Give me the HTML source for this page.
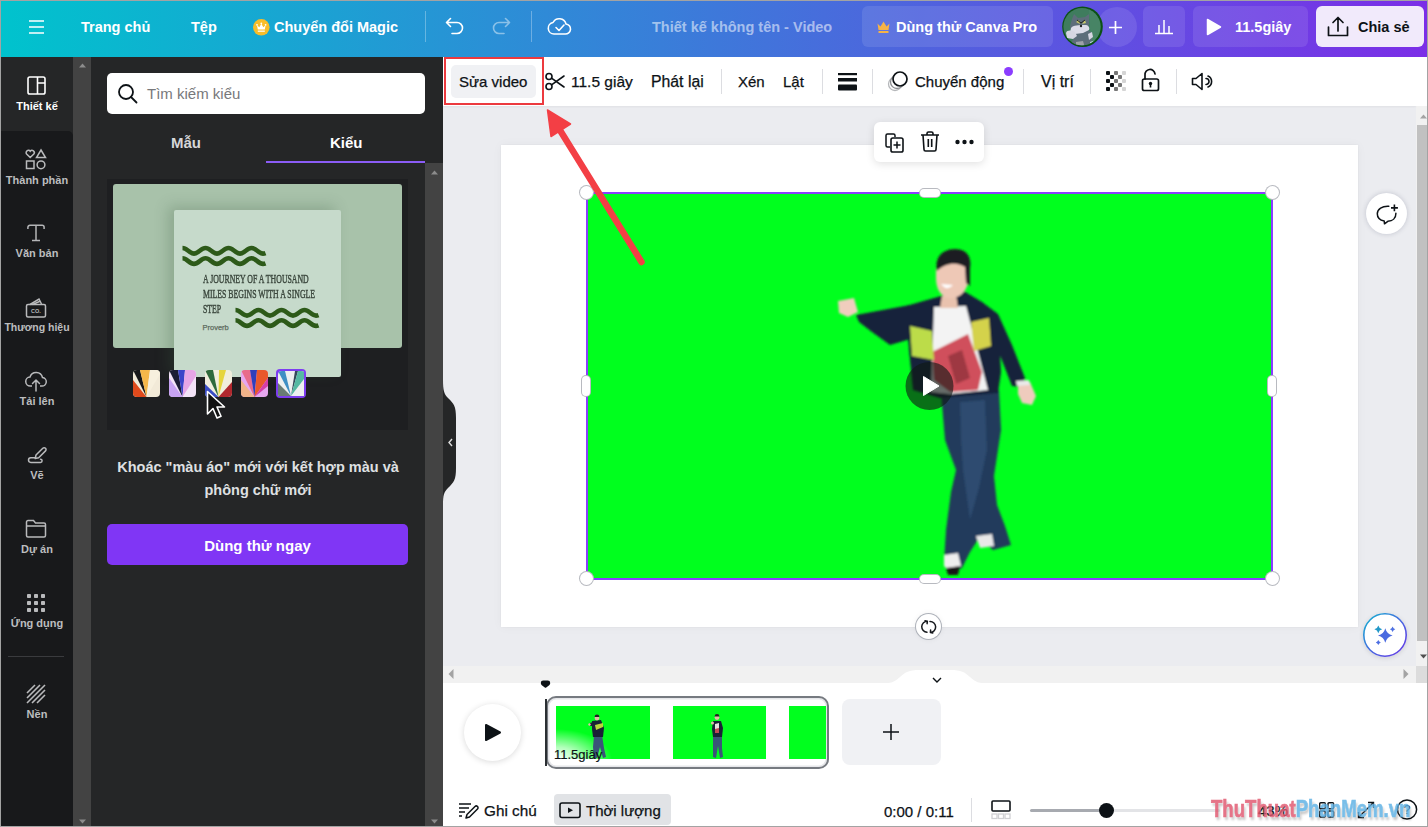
<!DOCTYPE html>
<html><head><meta charset="utf-8">
<style>
*{box-sizing:border-box;margin:0;padding:0}
html,body{width:1428px;height:827px;overflow:hidden;background:#a3a3a3;font-family:"Liberation Sans",sans-serif}
.a{position:absolute}
.t{position:absolute;white-space:nowrap;line-height:1}
svg{position:absolute;overflow:visible}
#hdr{left:1px;top:1px;width:1426px;height:56px;background:linear-gradient(90deg,#00c3cd 0%,#7b2ee7 100%)}
.ht{color:#fff;font-weight:bold;font-size:15px}
.hb{background:rgba(255,255,255,0.1);border-radius:6px}
#side{left:1px;top:57px;width:72px;height:770px;background:#18191b}
.sl{position:absolute;left:1px;width:72px;text-align:center;color:#bcbdbf;font-size:11px;font-weight:bold;line-height:1;white-space:nowrap}
.si{stroke:#b9babc;fill:none;stroke-width:1.5}
#sscroll{left:73px;top:57px;width:18px;height:770px;background:#434343}
#panel{left:91px;top:57px;width:352px;height:770px;background:#252627}
#main{left:443px;top:57px;width:985px;height:770px;background:#ebecf0}
.tt{font-size:15px;color:#0d1216;-webkit-text-stroke:0.25px #0d1216}
.sep{position:absolute;width:1px;background:#dcdde1}
</style></head><body>

<!-- HEADER -->
<div id="hdr" class="a"></div>
<svg style="left:29px;top:20px" width="15" height="14"><path d="M0 1H15M0 7H15M0 13H15" stroke="#fff" stroke-width="1.5"/></svg>
<div class="t ht" style="left:81px;top:19.5px;font-size:14.5px">Trang chủ</div>
<div class="t ht" style="left:191px;top:19.5px;font-size:14.5px">Tệp</div>
<svg style="left:253px;top:19px" width="17" height="17"><circle cx="8.3" cy="8.3" r="8.3" fill="#f8bd2a"/><path d="M4 6.2L6.3 8.2L8.3 4.8L10.3 8.2L12.6 6.2L11.8 10.5H4.8Z" fill="#fff"/><circle cx="4" cy="5.8" r="0.9" fill="#fff"/><circle cx="8.3" cy="4.4" r="0.9" fill="#fff"/><circle cx="12.6" cy="5.8" r="0.9" fill="#fff"/><rect x="4.8" y="11.5" width="7" height="1.4" fill="#fff" opacity="0.85"/></svg>
<div class="t ht" style="left:274px;top:19.5px;font-size:14.5px">Chuyển đổi Magic</div>
<div class="a" style="left:425px;top:11px;width:1px;height:31px;background:rgba(255,255,255,0.3)"></div>
<svg style="left:445px;top:17px" width="20" height="18"><path d="M2 5.5H12A5.5 5.5 0 0 1 12 16.5H7M5.5 1.5L1.5 5.5L5.5 9.5" stroke="#fff" stroke-width="1.6" fill="none" stroke-linecap="round" stroke-linejoin="round"/></svg>
<svg style="left:491px;top:17px" width="20" height="18"><path d="M18 5.5H8A5.5 5.5 0 0 0 8 16.5H13M14.5 1.5L18.5 5.5L14.5 9.5" stroke="rgba(255,255,255,0.45)" stroke-width="1.6" fill="none" stroke-linecap="round" stroke-linejoin="round"/></svg>
<div class="a" style="left:531px;top:11px;width:1px;height:31px;background:rgba(255,255,255,0.3)"></div>
<svg style="left:548px;top:15px" width="24" height="22"><path d="M6 19H17A5 5 0 0 0 18 9A7 7 0 0 0 5 7.5A5.8 5.8 0 0 0 6 19Z" stroke="#fff" stroke-width="1.6" fill="none" stroke-linejoin="round"/><path d="M8 12.5L11 15.5L16 10" stroke="#fff" stroke-width="1.6" fill="none" stroke-linecap="round" stroke-linejoin="round"/></svg>
<div class="t ht" style="left:652px;top:19.5px;font-size:14.5px;color:rgba(255,255,255,0.55)">Thiết kế không tên - Video</div>
<div class="a hb" style="left:862px;top:6px;width:191px;height:41px"></div>
<svg style="left:877px;top:21px" width="13" height="12"><path d="M0.5 2.5L3.5 5.5L6.5 0.5L9.5 5.5L12.5 2.5L11.5 9H1.5Z" fill="#f5b347"/><rect x="1.5" y="10" width="10" height="2" fill="#f5b347"/></svg>
<div class="t ht" style="left:896px;top:19.5px;font-size:14.5px">Dùng thử Canva Pro</div>
<div class="a" style="left:1097px;top:6.5px;width:40px;height:40px;border-radius:50%;background:rgba(255,255,255,0.1)"></div>
<svg style="left:1061px;top:6px" width="42" height="42"><defs><clipPath id="av"><circle cx="21" cy="20.7" r="18.6"/></clipPath></defs>
<circle cx="21.5" cy="20.7" r="20.3" fill="#0b5114"/>
<g clip-path="url(#av)"><rect width="42" height="42" fill="#3f7c5e"/><path d="M28 0L42 10V42H30Z" fill="#4d8a6a" opacity="0.6"/>
<path d="M11 13L13 8L17 12L24 11L28 8L28 18L27 24L30 26L31 34L26 42H12L11 36L13 30L10 26L9 20Z" fill="#5d6d7a"/>
<path d="M10 22C12 19 18 19 24 19C27 19 29 21 28 24L22 27L14 28L9 27Z" fill="#dcdce8"/>
<path d="M5 27C6 24 10 24 14 26L16 30L12 33L6 32Z" fill="#d6d6e2"/>
<path d="M27 28L31 26L32 31L28 34Z" fill="#d6d6e2"/>
<path d="M15 36L22 35L24 42H15Z" fill="#9ea2a8"/>
<path d="M29 36L38 33L40 40L30 42Z" fill="#c8d8ea"/>
<path d="M15 16L18 14L19 18ZM21 18L24 14L25 17Z" fill="#c9c86a"/><path d="M16 14L20 17L24 14" stroke="#222" stroke-width="1" fill="none"/><circle cx="20" cy="20" r="1.2" fill="#222"/>
</g></svg>
<svg style="left:1109px;top:21px" width="13" height="13"><path d="M6.5 0V13M0 6.5H13" stroke="#fff" stroke-width="1.7"/></svg>
<div class="a hb" style="left:1143px;top:6px;width:42px;height:41px"></div>
<svg style="left:1154px;top:17px" width="20" height="18"><path d="M1 16.5H19M5 16V8M10 16V3M15 16V9" stroke="#fff" stroke-width="1.5"/></svg>
<div class="a hb" style="left:1193px;top:6px;width:115px;height:41px"></div>
<svg style="left:1206px;top:18px" width="16" height="18"><path d="M1.5 1.5L14.5 9L1.5 16.5Z" fill="#fff" stroke="#fff" stroke-width="1.5" stroke-linejoin="round"/></svg>
<div class="t ht" style="left:1235px;top:19.5px;font-size:14.5px">11.5giây</div>
<div class="a" style="left:1316px;top:6px;width:108px;height:41px;border-radius:6px;background:#f1eafb"></div>
<svg style="left:1327px;top:16px" width="22" height="21"><path d="M1.5 11V19.5H20.5V11M11 15V2M6 6.5L11 1.5L16 6.5" stroke="#0d1216" stroke-width="1.7" fill="none" stroke-linecap="round" stroke-linejoin="round"/></svg>
<div class="t ht" style="left:1358px;top:19.5px;font-size:14.5px;color:#0d1216">Chia sẻ</div>

<!-- SIDEBAR -->
<div id="side" class="a"></div>
<div class="a" style="left:1px;top:57px;width:72px;height:80px;background:#252627"></div><div class="a" style="left:1px;top:131px;width:72px;height:10px;background:#18191b;border-top-right-radius:5px"></div>
<div id="sscroll" class="a"></div>
<svg style="left:78.5px;top:63px" width="8" height="5"><path d="M0 4.5L3.5 0.5L7 4.5Z" fill="#8c8c8c"/></svg>
<svg style="left:78.5px;top:819px" width="8" height="5"><path d="M0 0.5L3.5 4.5L7 0.5Z" fill="#8c8c8c"/></svg>

<svg style="left:27px;top:76px" width="19" height="19"><rect x="1" y="1" width="17" height="17" rx="1.8" stroke="#fff" stroke-width="1.6" fill="none"/><path d="M10.5 1V18M10.5 7H18" stroke="#fff" stroke-width="1.6"/></svg>
<div class="sl" style="top:100.5px;color:#fff">Thiết kế</div>

<svg style="left:25px;top:149px" width="22" height="21" class="si"><path d="M5.2 8.5L1.6 5A2.1 2.1 0 0 1 5.2 2.2A2.1 2.1 0 0 1 8.8 5Z" /><path d="M16 1L20.5 8.5H11.5Z"/><rect x="1.5" y="12" width="7.5" height="7.5"/><circle cx="16" cy="15.8" r="3.9"/></svg>
<div class="sl" style="top:174.5px">Thành phần</div>

<svg style="left:26px;top:223px" width="20" height="20"><path d="M1.9 6V4.3A2 2 0 0 1 3.9 2.3H16.1A2 2 0 0 1 18.1 4.3V6M10 2.3V17.6M6 17.6H14" stroke="#b4b5b7" stroke-width="1.5" fill="none"/></svg>
<div class="sl" style="top:248px">Văn bản</div>

<svg style="left:25px;top:296px" width="22" height="22" class="si"><path d="M5 8.5L14 3L16.5 8"/><path d="M7.5 8.5L15 5.2"/><rect x="1.5" y="8.5" width="19" height="12.5" rx="1.5"/><text x="11" y="17" font-size="5.5" font-family="Liberation Sans" font-weight="bold" fill="#b9babc" stroke="none" text-anchor="middle">CO.</text></svg>
<div class="sl" style="top:322px;font-size:10.5px">Thương hiệu</div>

<svg style="left:25px;top:370px" width="22" height="22" class="si"><path d="M7 16H5.5A4.5 4.5 0 0 1 5 7A6.5 6.5 0 0 1 17.5 7.5A4.2 4.2 0 0 1 16.5 16H15"/><path d="M11 21V10M7.5 13.5L11 10L14.5 13.5" stroke-linecap="round" stroke-linejoin="round"/></svg>
<div class="sl" style="top:396px">Tải lên</div>

<svg style="left:26px;top:444px" width="22" height="22" class="si"><path d="M10 11L16.8 4.2A1.9 1.9 0 0 1 19.5 6.9L12.7 13.7L9.2 14.6Z" stroke-linejoin="round"/><path d="M9.5 13.8H4.8A2.3 2.3 0 0 0 4.8 18.4H14.5A1.6 1.6 0 0 0 14.5 15.2" stroke-linecap="round"/></svg>
<div class="sl" style="top:470px">Vẽ</div>

<svg style="left:25px;top:519px" width="22" height="20" class="si"><path d="M1.5 3A1.5 1.5 0 0 1 3 1.5H8.5L10.5 4H19A1.5 1.5 0 0 1 20.5 5.5V16.5A1.5 1.5 0 0 1 19 18H3A1.5 1.5 0 0 1 1.5 16.5Z M1.5 7H20.5"/></svg>
<div class="sl" style="top:543.5px">Dự án</div>

<svg style="left:27px;top:594px" width="18" height="18"><g fill="#b9babc"><rect x="0" y="0" width="4" height="4" rx="0.8"/><rect x="7" y="0" width="4" height="4" rx="0.8"/><rect x="14" y="0" width="4" height="4" rx="0.8"/><rect x="0" y="7" width="4" height="4" rx="0.8"/><rect x="7" y="7" width="4" height="4" rx="0.8"/><rect x="14" y="7" width="4" height="4" rx="0.8"/><rect x="0" y="14" width="4" height="4" rx="0.8"/><rect x="7" y="14" width="4" height="4" rx="0.8"/><rect x="14" y="14" width="4" height="4" rx="0.8"/></g></svg>
<div class="sl" style="top:617.5px">Ứng dụng</div>

<div class="a" style="left:8px;top:656px;width:56px;height:1px;background:#3a3b3e"></div>
<svg style="left:26px;top:684px" width="20" height="20"><path d="M1 9L9 1M1 14L14 1M1 19L19 1M6 19L19 6M11 19L19 11" stroke="#b9babc" stroke-width="1.6"/></svg>
<div class="sl" style="top:708.5px">Nền</div>

<!-- PANEL -->
<div id="panel" class="a"></div>
<div class="a" style="left:107px;top:73px;width:318px;height:41px;background:#fff;border-radius:5px"></div>
<svg style="left:117px;top:83px" width="22" height="22"><circle cx="9" cy="9" r="7" stroke="#0d1216" stroke-width="1.8" fill="none"/><path d="M14 14L19.5 19.5" stroke="#0d1216" stroke-width="1.8" stroke-linecap="round"/></svg>
<div class="t" style="left:147px;top:86.3px;font-size:15px;color:#77787b">Tìm kiếm kiểu</div>
<div class="t" style="left:171px;top:134.8px;font-size:15px;font-weight:bold;color:#d6d7d9">Mẫu</div>
<div class="t" style="left:330px;top:134.8px;font-size:15px;font-weight:bold;color:#fff">Kiểu</div>
<div class="a" style="left:266px;top:161px;width:159px;height:2px;background:#8b5cf6"></div>
<div class="a" style="left:425px;top:163px;width:18px;height:664px;background:#434343"></div>
<svg style="left:430.5px;top:170px" width="8" height="5"><path d="M0 4.5L3.5 0.5L7 4.5Z" fill="#8c8c8c"/></svg>
<svg style="left:430.5px;top:819px" width="8" height="5"><path d="M0 0.5L3.5 4.5L7 0.5Z" fill="#8c8c8c"/></svg>

<!-- preview -->
<div class="a" style="left:107px;top:179px;width:301px;height:251px;background:#1e1f21"></div>
<div class="a" style="left:113px;top:184px;width:289px;height:164px;background:#a8c2aa;border-radius:3px"></div>
<div class="a" style="left:174px;top:210px;width:167px;height:167px;background:#c6dacb;box-shadow:-6px -4px 14px rgba(60,90,65,0.25);border-radius:2px"></div>
<svg style="left:182px;top:244px" width="84" height="24"><path d="M0.5 4.0 C4.87 4.0 7.63 9.6 12.00 9.6 C16.37 9.6 19.13 4.0 23.50 4.0 C27.87 4.0 30.63 9.6 35.00 9.6 C39.37 9.6 42.13 4.0 46.50 4.0 C50.87 4.0 53.63 9.6 58.00 9.6 C62.37 9.6 65.13 4.0 69.50 4.0 C73.87 4.0 76.63 9.6 81.00 9.6 C82.00 9.6 83.00 9.30 83.5 9.10 M0.5 14.3 C4.87 14.3 7.63 19.9 12.00 19.9 C16.37 19.9 19.13 14.3 23.50 14.3 C27.87 14.3 30.63 19.9 35.00 19.9 C39.37 19.9 42.13 14.3 46.50 14.3 C50.87 14.3 53.63 19.9 58.00 19.9 C62.37 19.9 65.13 14.3 69.50 14.3 C73.87 14.3 76.63 19.9 81.00 19.9 C82.00 19.9 83.00 19.60 83.5 19.40" stroke="#2d5a19" stroke-width="4.6" fill="none"/></svg>
<svg style="left:234.5px;top:306px" width="84" height="24"><path d="M0.5 4.0 C4.87 4.0 7.63 9.6 12.00 9.6 C16.37 9.6 19.13 4.0 23.50 4.0 C27.87 4.0 30.63 9.6 35.00 9.6 C39.37 9.6 42.13 4.0 46.50 4.0 C50.87 4.0 53.63 9.6 58.00 9.6 C62.37 9.6 65.13 4.0 69.50 4.0 C73.87 4.0 76.63 9.6 81.00 9.6 C82.00 9.6 83.00 9.30 83.5 9.10 M0.5 14.3 C4.87 14.3 7.63 19.9 12.00 19.9 C16.37 19.9 19.13 14.3 23.50 14.3 C27.87 14.3 30.63 19.9 35.00 19.9 C39.37 19.9 42.13 14.3 46.50 14.3 C50.87 14.3 53.63 19.9 58.00 19.9 C62.37 19.9 65.13 14.3 69.50 14.3 C73.87 14.3 76.63 19.9 81.00 19.9 C82.00 19.9 83.00 19.60 83.5 19.40" stroke="#2d5a19" stroke-width="4.6" fill="none"/></svg>
<div class="t" style="left:202.5px;top:270.5px;font-family:'Liberation Serif';font-weight:normal;font-size:13px;line-height:15.1px;color:#3a463c;transform:scaleX(0.6);transform-origin:0 0;-webkit-text-stroke:0.45px #3a463c">A JOURNEY OF A THOUSAND<br>MILES BEGINS WITH A SINGLE<br>STEP</div>
<div class="t" style="left:202.5px;top:323.5px;font-size:7.5px;color:#5e6c60;-webkit-text-stroke:0.25px #5e6c60">Proverb</div>
<!-- swatches -->
<svg style="left:133px;top:369px" width="175" height="30">
 <defs>
  <clipPath id="c1"><rect x="0" y="0" width="27" height="27" rx="4"/></clipPath>
 </defs>
 <g transform="translate(0,1)" clip-path="url(#c1)"><rect width="27" height="27" fill="#f2ead8"/><path d="M13.5 27L0 0H7Z" fill="#17181a"/><path d="M13.5 27L0 10V27Z" fill="#e04a1c"/><path d="M13.5 27L7 0H17Z" fill="#f5b74a"/><path d="M13.5 27L17 0H27V4Z" fill="#f7f0de"/></g>
 <g transform="translate(36,1)" clip-path="url(#c1)"><rect width="27" height="27" fill="#f3e3f7"/><path d="M13.5 27L0 0H9Z" fill="#1b1c34"/><path d="M13.5 27L0 8V27Z" fill="#c8a3f3"/><path d="M13.5 27L9 0H16Z" fill="#3b44c9"/><path d="M13.5 27L16 0H27V6Z" fill="#e6a6e6"/></g>
 <g transform="translate(72,1)" clip-path="url(#c1)"><rect width="27" height="27" fill="#f0eedc"/><path d="M13.5 27L0 0H8Z" fill="#2e6a3b"/><path d="M13.5 27L0 14V27Z" fill="#3a4dc4"/><path d="M13.5 27L14 0H21Z" fill="#e6d53c"/><path d="M13.5 27L27 12V27Z" fill="#b0282e"/></g>
 <g transform="translate(108,1)" clip-path="url(#c1)"><rect width="27" height="27" fill="#e7a7ef"/><path d="M13.5 27L0 0H9Z" fill="#e86b8c"/><path d="M13.5 27L0 10V27Z" fill="#f2b48a"/><path d="M13.5 27L9 0H16Z" fill="#2f3fbc"/><path d="M13.5 27L16 0H27V8Z" fill="#e9582c"/><path d="M13.5 27L27 8V16Z" fill="#d43ea8"/></g>
 <g transform="translate(143,0)"><rect x="0" y="0" width="30" height="29" rx="4" fill="#7d3df0"/><g transform="translate(2,2)" clip-path="url(#c1)"><rect width="26" height="25" fill="#eef0f0"/><path d="M13 25L0 0H7Z" fill="#3f8fc4"/><path d="M13 25L0 12V25Z" fill="#697c74"/><path d="M13 25L17 0H20Z" fill="#34495a"/><path d="M13 25L20 0H26V8Z" fill="#54b8a2"/></g></g>
</svg>
<!-- cursor -->
<svg style="left:206px;top:390px" width="22" height="32"><path d="M1.5 1.5V24L7 18.5L11 28L15 26.3L11 17H18.5Z" fill="#111" stroke="#fff" stroke-width="1.6" stroke-linejoin="round"/></svg>

<div class="t" style="left:91px;width:334px;text-align:center;top:455.8px;font-size:14.5px;font-weight:bold;color:#dfe0e2;line-height:22.7px">Khoác "màu áo" mới với kết hợp màu và<br>phông chữ mới</div>
<div class="a" style="left:107px;top:524px;width:301px;height:41px;background:#8036f5;border-radius:5px"></div>
<div class="t" style="left:107px;width:301px;text-align:center;top:537.6px;font-size:15px;font-weight:bold;color:#fff">Dùng thử ngay</div>

<!-- MAIN -->
<div id="main" class="a"></div>
<!-- collapse tab -->
<svg style="left:443px;top:380px" width="16" height="125"><path d="M0 0C0 10 1 14 5 18C11 24 13 26 13 38V88C13 100 11 102 5 108C1 112 0 115 0 125Z" fill="#252627"/><path d="M9 59L6 62.5L9 66" stroke="#ddd" stroke-width="1.4" fill="none"/></svg>
<!-- right scrollbar -->
<div class="a" style="left:1416px;top:106px;width:12px;height:560px;background:#f1f1f1"></div>
<div class="a" style="left:1417px;top:124.5px;width:10px;height:516px;background:#c1c1c1"></div>
<svg style="left:1420px;top:113.5px" width="8" height="5"><path d="M0 4.5L3.5 0.5L7 4.5Z" fill="#a3a3a3"/></svg>
<svg style="left:1420px;top:653.5px" width="8" height="5"><path d="M0 0.5L3.5 4.5L7 0.5Z" fill="#505050"/></svg>
<!-- horizontal scrollbar -->
<div class="a" style="left:443px;top:665.5px;width:973px;height:18.5px;background:#f1f1f1"></div>
<div class="a" style="left:1416px;top:665.5px;width:12px;height:18.5px;background:#dcdcdc"></div>
<svg style="left:448px;top:669px" width="6" height="10"><path d="M5.5 0L0.5 5L5.5 10Z" fill="#a3a3a3"/></svg>
<svg style="left:1403px;top:669px" width="6" height="10"><path d="M0.5 0L5.5 5L0.5 10Z" fill="#a3a3a3"/></svg>

<!-- TOOLBAR -->
<div class="a" style="left:443px;top:57px;width:973px;height:49px;background:#fff;box-shadow:0 1px 2px rgba(0,0,0,0.05)"></div><div class="a" style="left:1416px;top:57px;width:12px;height:49px;background:#fff"></div>
<div class="a" style="left:451px;top:65px;width:85px;height:33px;background:#f0f1f4;border-radius:5px"></div>
<div class="t tt" style="left:459px;top:74.2px">Sửa video</div>
<div class="a" style="left:443.5px;top:57px;width:100px;height:48px;border:2px solid #ec3a3f"></div>
<svg style="left:545px;top:72px" width="20" height="19"><circle cx="4" cy="4.5" r="3" stroke="#0d1216" stroke-width="1.6" fill="none"/><circle cx="4" cy="14.5" r="3" stroke="#0d1216" stroke-width="1.6" fill="none"/><path d="M6.5 6.2L19 15M6.5 12.8L19 4" stroke="#0d1216" stroke-width="1.6" stroke-linecap="round"/></svg>
<div class="t tt" style="left:571px;top:74.2px;font-size:15.5px">11.5 giây</div>
<div class="t tt" style="left:651px;top:74.2px;font-size:15.8px">Phát lại</div>
<div class="sep" style="left:721px;top:69px;height:25px"></div>
<div class="t tt" style="left:738px;top:74.2px">Xén</div>
<div class="t tt" style="left:783px;top:74.2px">Lật</div>
<div class="sep" style="left:822px;top:69px;height:25px"></div>
<svg style="left:838px;top:73px" width="19" height="18"><rect x="0" y="0" width="19" height="2.2" fill="#0d1216"/><rect x="0" y="5" width="19" height="3.5" fill="#0d1216"/><rect x="0" y="11.5" width="19" height="6" rx="1" fill="#0d1216"/></svg>
<div class="sep" style="left:872px;top:69px;height:25px"></div>
<svg style="left:886px;top:70px" width="24" height="22"><circle cx="9" cy="14" r="6.5" stroke="#b5b7ba" stroke-width="1.3" fill="none"/><circle cx="11" cy="12" r="6.5" stroke="#8a8c90" stroke-width="1.3" fill="#fff"/><circle cx="14" cy="9" r="7" stroke="#0d1216" stroke-width="1.7" fill="#fff"/></svg>
<div class="t tt" style="left:915px;top:74.2px">Chuyển động</div>
<div class="a" style="left:1004px;top:67px;width:9px;height:9px;border-radius:50%;background:#8b3dff"></div>
<div class="sep" style="left:1023px;top:69px;height:25px"></div>
<div class="t tt" style="left:1041px;top:74.2px;font-size:16px">Vị trí</div>
<div class="sep" style="left:1090px;top:69px;height:25px"></div>
<svg style="left:1106px;top:71px" width="22" height="21"><g fill="#0d1216"><rect x="0" y="0" width="4" height="4" rx="1"/><rect x="0" y="8" width="4" height="4" rx="1"/><rect x="0" y="16" width="4" height="4" rx="1"/><rect x="4" y="4" width="4" height="4" rx="1"/><rect x="4" y="12" width="4" height="4" rx="1"/></g><g fill="#777"><rect x="8" y="0" width="4" height="4" rx="1"/><rect x="8" y="8" width="4" height="4" rx="1"/><rect x="8" y="16" width="4" height="4" rx="1"/><rect x="12" y="4" width="4" height="4" rx="1"/><rect x="12" y="12" width="4" height="4" rx="1"/></g><g fill="#d5d5d5"><rect x="16" y="0" width="4" height="4" rx="1"/><rect x="16" y="8" width="4" height="4" rx="1"/><rect x="16" y="16" width="4" height="4" rx="1"/></g></svg>
<svg style="left:1141px;top:69px" width="20" height="23"><path d="M4 10V6A5 5 0 0 1 14 5" stroke="#0d1216" stroke-width="1.7" fill="none" stroke-linecap="round"/><rect x="1.5" y="10" width="16" height="11.5" rx="1.8" stroke="#0d1216" stroke-width="1.7" fill="none"/><circle cx="9.5" cy="14.5" r="1.7" fill="#0d1216"/><path d="M9.5 15V18.5" stroke="#0d1216" stroke-width="1.6"/></svg>
<div class="sep" style="left:1176px;top:69px;height:25px"></div>
<svg style="left:1191px;top:72px" width="22" height="19"><path d="M1.5 6.5H5L11 1.5V17.5L5 12.5H1.5Z" stroke="#0d1216" stroke-width="1.6" fill="none" stroke-linejoin="round"/><path d="M15 6.5A3 3 0 0 1 15 12.5M17 4A6 6 0 0 1 17 15" stroke="#0d1216" stroke-width="1.6" fill="none" stroke-linecap="round"/></svg>

<!-- PAGE -->
<div class="a" style="left:501px;top:145px;width:857px;height:482px;background:#fff;box-shadow:0 0 2px rgba(0,0,0,0.05),0 0 10px rgba(0,0,0,0.04)"></div>
<!-- video -->
<div class="a" style="left:586px;top:192px;width:687px;height:388px;background:#00ff1e;border:2px solid #8b3dff"></div>
<svg style="left:0;top:0" width="1428" height="827" id="fig">
 <defs><filter id="bl" x="-10%" y="-10%" width="120%" height="120%"><feGaussianBlur stdDeviation="0.8"/></filter></defs>
 <g filter="url(#bl)">
 <!-- jeans -->
 <path d="M941 392L999 390L1001 430L994 476L997 505L1005 526L1011 545L993 550L979 538L970 552L962 568L950 572L944 562L946 530L951 492L956 470L945 440Z" fill="#213a5c"/>
 <path d="M960 402L985 400L987 450L979 488L970 520L963 470L961 440Z" fill="#3a5b82" opacity="0.5"/>
 <path d="M944 555L958 553L961 566L952 573L944 566Z" fill="#eeeeee"/>
 <path d="M976 536L992 534L994 546L980 548Z" fill="#e8e8e8"/>
 <path d="M946 568L960 566L958 575L948 575Z" fill="#151515"/>
 <!-- right arm -->
 <path d="M982 302L998 314L1012 345L1025 378L1022 387L1012 386L1001 358L990 335Z" fill="#18223b"/>
 <path d="M1018 383L1030 382L1036 396L1032 405L1022 403L1018 394Z" fill="#efcbbd"/>
 <path d="M1016 381L1029 380L1030 385L1017 386Z" fill="#e9e9e9"/>
 <!-- left arm -->
 <path d="M856 315L872 312L910 305L914 338L890 345L872 332L859 322Z" fill="#18223b"/>
 <path d="M838 301L854 298L858 312L848 317L839 313Z" fill="#f0cdbd"/>
 <!-- jacket -->
 <path d="M906 306L934 298L962 290L982 302L998 318L1001 372L998 393L940 398L913 390L909 350Z" fill="#18223b"/>
 <path d="M934 307L966 306L988 390L950 394L931 392Z" fill="#f3f3f3"/>
 <path d="M932 352L968 334L982 372L978 390L950 392L934 380Z" fill="#d0505c"/>
 <path d="M948 356L962 350L970 378L956 384Z" fill="#8e2f3a" opacity="0.75"/>
 <path d="M910 326L932 331L934 360L912 356Z" fill="#bcdc4a"/>
 <path d="M971 322L989 318L991 346L974 351Z" fill="#d4d24c"/>
 <!-- neck -->
 <path d="M942 296L956 294L958 308L940 308Z" fill="#e9c2ae"/>
 <!-- head -->
 <path d="M936 270C939 262 959 259 966 265L968 283C965 295 956 299 948 298C940 296 936 288 936 278Z" fill="#eec8b6"/>
 <path d="M937 271C934 256 944 249 955 249C966 249 972 256 970 268L970 286L966 283L965 267C958 262 946 262 937 271Z" fill="#1f1f24"/>
 <path d="M941 284Q947 292 953 285Z" fill="#fff"/>
 </g>
 <!-- play button -->
 <circle cx="929.5" cy="386" r="24" fill="rgba(15,25,20,0.62)"/>
 <path d="M923.5 376.5L939 386L923.5 395.5Z" fill="#fff" stroke="#fff" stroke-width="1" stroke-linejoin="round"/>
</svg>
<!-- handles -->
<div class="a hd" style="left:579.5px;top:186px"></div>
<div class="a hd" style="left:1265.5px;top:186px"></div>
<div class="a hd" style="left:579.5px;top:572px"></div>
<div class="a hd" style="left:1265.5px;top:572px"></div>
<div class="a" style="left:919.5px;top:189px;width:20px;height:8px;border-radius:4px;background:#fff;box-shadow:0 0 0 1px #b8bac0"></div>
<div class="a" style="left:919.5px;top:575px;width:20px;height:8px;border-radius:4px;background:#fff;box-shadow:0 0 0 1px #b8bac0"></div>
<div class="a" style="left:582px;top:376px;width:8px;height:20px;border-radius:4px;background:#fff;box-shadow:0 0 0 1px #b8bac0"></div>
<div class="a" style="left:1268px;top:376px;width:8px;height:20px;border-radius:4px;background:#fff;box-shadow:0 0 0 1px #b8bac0"></div>
<style>.hd{width:13px;height:13px;border-radius:50%;background:#fff;box-shadow:0 0 0 1px #b8bac0}</style>
<!-- rotate -->
<div class="a" style="left:916px;top:614px;width:25px;height:25px;border-radius:50%;background:#fff;box-shadow:0 0 0 1px #aeb2ba,0 0 6px rgba(0,0,0,0.08)"></div><svg style="left:916px;top:614px" width="26" height="26"><path d="M11.4 7.3A5.4 5.4 0 0 0 11 18.2M14 7.5A5.4 5.4 0 0 1 14.4 18.4M9 6.8L11.4 7.3L11.1 9.7M16.8 18.9L14.4 18.4L14.6 16" stroke="#16191d" stroke-width="1.5" fill="none" stroke-linecap="round" stroke-linejoin="round"/></svg>
<!-- floating toolbar -->
<div class="a" style="left:874px;top:122px;width:110px;height:40px;background:#fff;border-radius:6px;box-shadow:0 2px 8px rgba(0,0,0,0.12)"></div>
<svg style="left:884px;top:132px" width="22" height="21"><path d="M6 15H3.5A1.5 1.5 0 0 1 2 13.5V3.5A1.5 1.5 0 0 1 3.5 2H9.5A1.5 1.5 0 0 1 11 3.5V5" stroke="#0d1216" stroke-width="1.5" fill="none"/><rect x="7" y="6" width="12" height="14" rx="1.8" stroke="#0d1216" stroke-width="1.6" fill="none"/><path d="M13 9.5V16.5M9.5 13H16.5" stroke="#0d1216" stroke-width="1.5"/></svg>
<svg style="left:920px;top:131px" width="20" height="21"><path d="M1 4H19M7 4V2.5A1.5 1.5 0 0 1 8.5 1H11.5A1.5 1.5 0 0 1 13 2.5V4M3 4L4 18.5A1.5 1.5 0 0 0 5.5 20H14.5A1.5 1.5 0 0 0 16 18.5L17 4M8.3 8V16M11.7 8V16" stroke="#0d1216" stroke-width="1.6" fill="none"/></svg>
<svg style="left:955px;top:139px" width="20" height="6"><circle cx="2.5" cy="3" r="2.2" fill="#0d1216"/><circle cx="9.5" cy="3" r="2.2" fill="#0d1216"/><circle cx="16.5" cy="3" r="2.2" fill="#0d1216"/></svg>
<!-- comment btn -->
<div class="a" style="left:1366px;top:192.5px;width:41px;height:41px;border-radius:50%;background:#fff;box-shadow:0 0 5px rgba(40,50,80,0.22)"></div>
<svg style="left:1370px;top:198px" width="30" height="30"><path d="M18.8 8.3C12.2 7.9 7.3 11 7.3 15.8C7.3 19.5 10 22.2 14.2 23.1L14.5 25.8L17.8 23.3C22.6 23.1 26 20.2 25.9 15.3" stroke="#0d1216" stroke-width="1.5" fill="none" stroke-linejoin="round" stroke-linecap="round"/><path d="M24.4 6.6V13.3M21 9.9H27.9" stroke="#0d1216" stroke-width="1.6"/></svg>
<!-- magic btn -->
<div class="a" style="left:1363px;top:613px;width:44px;height:44px;border-radius:50%;background:#fff;box-shadow:0 1px 5px rgba(0,0,0,0.12)"></div>
<svg style="left:1363px;top:613px" width="44" height="44"><defs><linearGradient id="mg" x1="0" y1="0" x2="1" y2="1"><stop offset="0" stop-color="#10b4cf"/><stop offset="0.55" stop-color="#4a63e0"/><stop offset="1" stop-color="#6a38e6"/></linearGradient><linearGradient id="mg2" x1="0" y1="0" x2="1" y2="1"><stop offset="0" stop-color="#1aa6c8"/><stop offset="1" stop-color="#5a4ee4"/></linearGradient></defs><circle cx="22" cy="22" r="21.2" stroke="url(#mg)" stroke-width="1.6" fill="none"/>
<path d="M22.3 15.2Q23.76 21.04 29.6 22.5Q23.76 23.96 22.3 29.8Q20.84 23.96 15.0 22.5Q20.84 21.04 22.3 15.2Z" fill="#4a6ae0"/><path d="M15.3 12.4Q16.080000000000002 15.520000000000001 19.2 16.3Q16.080000000000002 17.080000000000002 15.3 20.2Q14.520000000000001 17.080000000000002 11.4 16.3Q14.520000000000001 15.520000000000001 15.3 12.4Z" fill="#2398c8"/><path d="M29.6 13.600000000000001Q30.275000000000002 15.625 32.300000000000004 16.3Q30.275000000000002 16.975 29.6 19.0Q28.925 16.975 26.900000000000002 16.3Q28.925 15.625 29.6 13.600000000000001Z" fill="#4f72e2"/><path d="M15.3 27.1Q16.05 28.85 17.8 29.6Q16.05 30.35 15.3 32.1Q14.55 30.35 12.8 29.6Q14.55 28.85 15.3 27.1Z" fill="#4e6fe2"/></svg>

<!-- TIMELINE -->
<div class="a" style="left:443px;top:683px;width:985px;height:144px;background:#fff"></div>
<svg style="left:880px;top:666px" width="110" height="18"><path d="M0 17.5C12 17.5 14 16 20 11C26 6 28 4 40 4H70C82 4 84 6 90 11C96 16 98 17.5 110 17.5Z" fill="#fff"/><path d="M53 678L57 682L61 678" transform="translate(0,-666)" stroke="#0d1216" stroke-width="1.4" fill="none"/></svg>
<div class="a" style="left:464px;top:704px;width:57px;height:57px;border-radius:50%;background:#fff;box-shadow:0 1px 6px rgba(0,0,0,0.15)"></div>
<svg style="left:484px;top:723px" width="18" height="19"><path d="M2 2L16 9.5L2 17Z" fill="#0d1216" stroke="#0d1216" stroke-width="2" stroke-linejoin="round"/></svg>
<svg style="left:539.5px;top:680px" width="12" height="9"><path d="M0.8 3A2.4 2.4 0 0 1 3.2 0.6H7.8A2.4 2.4 0 0 1 10.2 3C10.2 4 9.8 4.6 9.2 5.3L6.2 7.6A1.2 1.2 0 0 1 4.8 7.6L1.8 5.3C1.2 4.6 0.8 4 0.8 3Z" fill="#0d1216"/></svg>
<div class="a" style="left:546px;top:696px;width:283px;height:73px;border:2px solid #767a80;border-radius:10px;background:#fff;box-shadow:inset 0 0 0 1.5px #e6e7ea"></div>
<div class="a" style="left:545px;top:699px;width:2px;height:67px;background:#2b2f33"></div>
<div class="a" style="left:556px;top:706px;width:94px;height:53px;background:#00ff1e;overflow:hidden"><div class="a" style="left:0;top:0;width:94px;height:53px;background:radial-gradient(ellipse 56px 30px at 0 53px,rgba(255,255,255,1) 0%,rgba(255,255,255,0.7) 40%,rgba(255,255,255,0) 100%)"></div></div>
<div class="a" style="left:673px;top:706px;width:93px;height:53px;background:#00ff1e"></div>
<div class="a" style="left:789px;top:706px;width:37px;height:53px;background:#00ff1e"></div>
<svg style="left:0;top:0" width="1428" height="827">
 <path d="M594 736L602 735L604 748L606 757L603 758L600 747L597 758L594 758L593 747Z" fill="#3a5578"/>
 <path d="M592 721L601 720L604 728L603 737L593 737L592 729Z" fill="#1a2236"/>
 <path d="M590 723L593 722L594 726L590 726Z" fill="#1a2236"/>
 <path d="M595 725L603 723L603 727L596 730Z" fill="#b9d43a"/>
 <circle cx="597" cy="718" r="2.4" fill="#e3bda8"/><path d="M594.6 717A2.4 2.4 0 0 1 599.4 717Z" fill="#222"/>
 <circle cx="589.5" cy="724.5" r="1.2" fill="#e3bda8"/>
 <path d="M713 736L722 736L722 748L723 757L720 758L718 746L716 758L713 757L713 747Z" fill="#3a5578"/>
 <path d="M713 721L721 721L723 728L722 737L713 737L712 729Z" fill="#1a2236"/>
 <path d="M715 724L719 723L719 733L715 733Z" fill="#e8e0e0"/><path d="M715 729L719 728L719 733L715 733Z" fill="#c04a55"/>
 <circle cx="717" cy="717.5" r="2.4" fill="#e3bda8"/><path d="M714.6 716.5A2.4 2.4 0 0 1 719.4 716.5Z" fill="#222"/>
 <circle cx="712.5" cy="723" r="1.5" fill="#e3bda8"/>
</svg>
<div class="t" style="left:554px;top:748.3px;font-size:13px;color:#0d1216;-webkit-text-stroke:0.2px #0d1216">11.5giây</div>
<div class="a" style="left:842px;top:699px;width:99px;height:66px;background:#f0f1f4;border-radius:8px"></div>
<svg style="left:883px;top:724px" width="16" height="16"><path d="M8 0V16M0 8H16" stroke="#0d1216" stroke-width="1.5"/></svg>

<!-- BOTTOM BAR -->
<svg style="left:458px;top:802px" width="22" height="18"><path d="M1 2H13M1 6H11M1 10H7M1 14H4" stroke="#0d1216" stroke-width="1.5"/><path d="M8 16L9 12.5L17 4.5A1.6 1.6 0 0 1 19.5 7L11.5 15Z" stroke="#0d1216" stroke-width="1.5" fill="none" stroke-linejoin="round"/></svg>
<div class="t tt" style="left:484px;top:803.3px;font-size:15.3px">Ghi chú</div>
<div class="a" style="left:554px;top:794px;width:117px;height:31px;background:#e1e3e6;border-radius:4px"></div>
<svg style="left:559px;top:802px" width="22" height="17"><rect x="1" y="1" width="20" height="14.5" rx="2" stroke="#0d1216" stroke-width="1.6" fill="none"/><path d="M9 5.5L14 8.3L9 11Z" fill="#0d1216"/></svg>
<div class="t tt" style="left:586px;top:803.3px">Thời lượng</div>
<div class="t tt" style="left:884px;top:804px;font-size:15px">0:00 / 0:11</div>
<div class="sep" style="left:971px;top:798px;height:24px"></div>
<svg style="left:991px;top:800px" width="20" height="20"><rect x="1" y="1" width="18" height="10" rx="1" stroke="#0d1216" stroke-width="1.6" fill="none"/><g fill="none" stroke="#cfd0d3" stroke-width="1.3"><rect x="1" y="14" width="5" height="4.5"/><rect x="7.5" y="14" width="5" height="4.5"/><rect x="14" y="14" width="5" height="4.5"/></g></svg>
<div class="a" style="left:1030px;top:809px;width:76px;height:3px;background:#a7aab0;border-radius:2px"></div>
<div class="a" style="left:1106px;top:809px;width:114px;height:3px;background:#e3e4e7;border-radius:2px"></div>
<div class="a" style="left:1099px;top:803px;width:15px;height:15px;border-radius:50%;background:#0d1216"></div>
<div class="t tt" style="left:1258px;top:803.3px">43%</div>
<svg style="left:1319px;top:802px" width="16" height="16"><g stroke="#0d1216" stroke-width="1.4" fill="none"><rect x="0.7" y="0.7" width="5.6" height="6" rx="1"/><rect x="9" y="0.7" width="5.6" height="6" rx="1"/><rect x="0.7" y="9" width="5.6" height="6" rx="1"/><rect x="9" y="9" width="5.6" height="6" rx="1"/></g></svg>
<svg style="left:1357px;top:801px" width="18" height="18"><path d="M1.5 16.5L16.5 1.5M11 1.5H16.5V7M1.5 11V16.5H7" stroke="#0d1216" stroke-width="1.4" fill="none"/></svg>
<svg style="left:1396px;top:799px" width="22" height="22"><circle cx="11" cy="10.5" r="9.6" stroke="#0d1216" stroke-width="1.5" fill="none"/><text x="11" y="15" font-size="12" font-family="Liberation Sans" text-anchor="middle" fill="#0d1216">?</text></svg>
<!-- watermark -->
<div class="t" style="left:1211px;top:797px;font-size:24px;font-weight:bold;transform:scaleX(0.775);transform-origin:0 0;text-shadow:0 0 1.5px rgba(255,255,255,0.9),2px 3px 3px rgba(0,0,0,0.3);opacity:0.82"><span style="color:#e0566e;-webkit-text-stroke:0.7px #e0566e">ThuThuat</span><span style="color:#5cb0e4;-webkit-text-stroke:0.7px #5cb0e4">PhanMem.vn</span></div>

<!-- arrow annotation -->
<svg style="left:0;top:0" width="1428" height="827"><path d="M641.5 262L558 127" stroke="#f33f45" stroke-width="6.5" stroke-linecap="round"/><path d="M547.5 110L551 136.5L570.5 124Z" fill="#f33f45" stroke="#f33f45" stroke-width="1.5" stroke-linejoin="round"/></svg>

<!-- bottom/right border -->
<div class="a" style="left:0;top:826px;width:1428px;height:1px;background:#a3a3a3"></div>
<div class="a" style="left:1427px;top:0;width:1px;height:827px;background:#a3a3a3"></div>
</body></html>
